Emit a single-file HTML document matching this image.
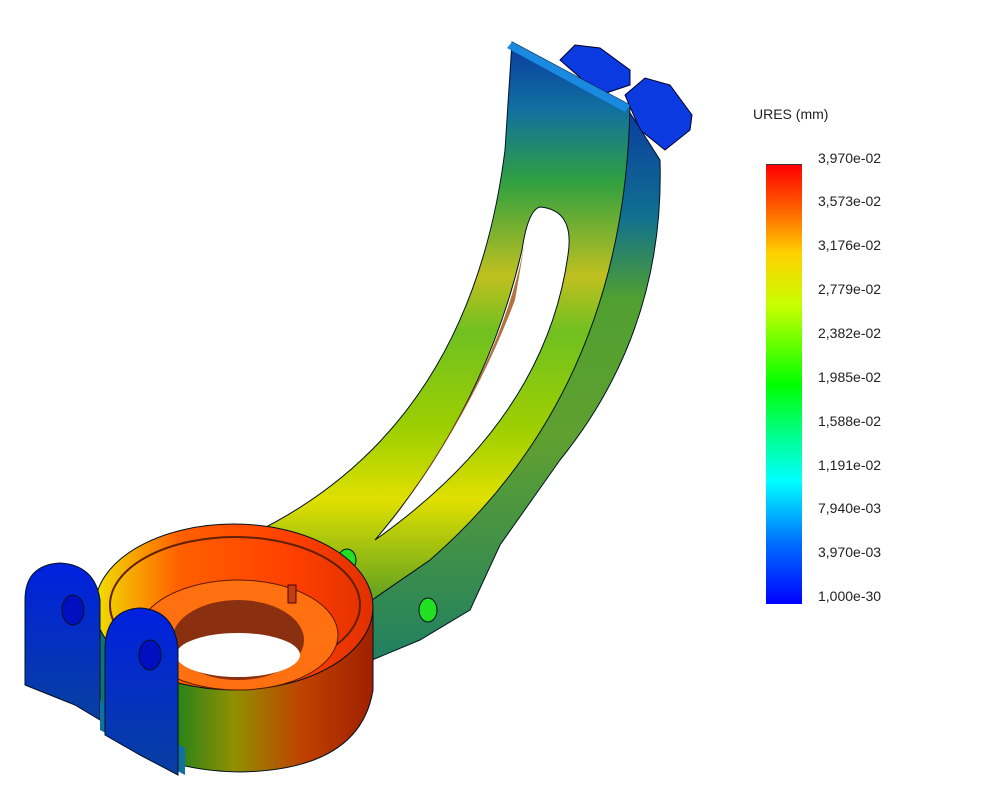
<!DOCTYPE html>
<html><head><meta charset="utf-8"><style>
html,body{margin:0;padding:0;background:#fff;width:990px;height:795px;overflow:hidden}
.t{position:absolute;font-family:"Liberation Sans",sans-serif;font-size:14px;color:#222}
</style></head><body>
<svg width="990" height="795" style="position:absolute;left:0;top:0">
<defs>
<linearGradient id="arm" x1="0" y1="0" x2="0" y2="1">
<stop offset="0" stop-color="#0a3aa0"/><stop offset="0.12" stop-color="#1070a0"/><stop offset="0.25" stop-color="#30a040"/><stop offset="0.42" stop-color="#c0c020"/><stop offset="0.52" stop-color="#70c020"/><stop offset="0.7" stop-color="#a0d000"/><stop offset="0.82" stop-color="#e0e000"/><stop offset="1" stop-color="#60a020"/>
</linearGradient>
<linearGradient id="armr" x1="0" y1="0" x2="0" y2="1">
<stop offset="0" stop-color="#0a3aa0"/><stop offset="0.2" stop-color="#107090"/><stop offset="0.35" stop-color="#50a030"/><stop offset="0.6" stop-color="#60a030"/><stop offset="1" stop-color="#208060"/>
</linearGradient>
<linearGradient id="ring" x1="0" y1="0" x2="1" y2="0">
<stop offset="0" stop-color="#f0e000"/><stop offset="0.3" stop-color="#ff6000"/><stop offset="0.7" stop-color="#ff4000"/><stop offset="1" stop-color="#e03000"/>
</linearGradient>
<linearGradient id="side" x1="0" y1="0" x2="1" y2="0">
<stop offset="0" stop-color="#107080"/><stop offset="0.25" stop-color="#108020"/><stop offset="0.5" stop-color="#909000"/><stop offset="0.75" stop-color="#c04000"/><stop offset="1" stop-color="#a02000"/>
</linearGradient>
<linearGradient id="blue" x1="0" y1="0" x2="0" y2="1">
<stop offset="0" stop-color="#0020e0"/><stop offset="1" stop-color="#0840a0"/>
</linearGradient>
</defs>
<path d="M560,60 L575,45 L600,48 L630,70 L630,85 L600,95 Z" fill="#0a3ae0" stroke="#002" stroke-width="1"/>
<path d="M625,95 L645,78 L670,85 L692,115 L690,130 L665,150 L640,130 Z" fill="#0a3ae0" stroke="#002" stroke-width="1"/>
<path d="M625,105 L660,160 Q665,330 560,460 L500,545 L470,610 L420,640 L372,660 L372,600 L430,560 Q600,380 620,200 Z" fill="url(#armr)" stroke="#012" stroke-width="1"/>
<path d="M512,42 L630,105 Q625,390 430,560 L372,600 L340,590 L300,560 L250,535 Q470,430 505,150 Z" fill="url(#arm)" stroke="#012" stroke-width="1"/>
<path d="M512,42 L630,105 L625,112 L507,48 Z" fill="#1a8ae0"/>
<path d="M540,207 Q575,210 568,255 Q545,420 375,540 Q485,410 522,250 Q528,210 540,207 Z" fill="#fff" stroke="#012"/>
<path d="M527,230 Q505,370 385,530 Q470,420 515,300 Z" fill="#a05010" opacity="0.8"/>
<ellipse cx="347" cy="560" rx="9" ry="11" fill="#20e020" stroke="#012"/>
<ellipse cx="428" cy="610" rx="9" ry="12" fill="#20e020" stroke="#012"/>
<path d="M95,607 L95,690 Q120,770 240,772 Q360,770 373,690 L373,607 Z" fill="url(#side)" stroke="#012"/>
<ellipse cx="234" cy="607" rx="139" ry="83" fill="url(#ring)" stroke="#012"/>
<ellipse cx="235" cy="605" rx="125" ry="68" fill="none" stroke="#602000" stroke-width="2"/>
<ellipse cx="238" cy="635" rx="100" ry="55" fill="#ff7010" stroke="#601800"/>
<ellipse cx="238" cy="640" rx="66" ry="40" fill="#8a3010"/>
<ellipse cx="238" cy="655" rx="62" ry="22" fill="#fff"/>
<rect x="288" y="585" width="8" height="18" fill="#c04010" stroke="#501"/>
<path d="M25,600 Q25,565 60,563 Q95,565 100,600 L100,720 L75,705 L25,685 Z" fill="url(#blue)" stroke="#012"/>
<ellipse cx="73" cy="610" rx="11" ry="15" fill="#0010c0" stroke="#012"/>
<path d="M100,700 L185,748 L185,775 L100,730 Z" fill="#1070a0"/>
<path d="M105,650 Q105,610 140,608 Q175,610 178,650 L178,775 L140,755 L105,735 Z" fill="url(#blue)" stroke="#012"/>
<ellipse cx="150" cy="655" rx="11" ry="15" fill="#0010c0" stroke="#012"/>
</svg>
<div class="t" style="left:753px;top:106px">URES (mm)</div>
<div style="position:absolute;left:766px;top:164px;width:36px;height:439px;background:linear-gradient(#ff0000,#ff6000 10%,#ffd000 20%,#c8ff00 32%,#00ff00 50%,#00ff90 62%,#00ffff 72%,#0070ff 86%,#0000ff);border-top:1px solid #333"></div>
<div class="t" style="left:818px;top:150px">3,970e-02</div>
<div class="t" style="left:818px;top:193px">3,573e-02</div>
<div class="t" style="left:818px;top:237px">3,176e-02</div>
<div class="t" style="left:818px;top:281px">2,779e-02</div>
<div class="t" style="left:818px;top:325px">2,382e-02</div>
<div class="t" style="left:818px;top:369px">1,985e-02</div>
<div class="t" style="left:818px;top:413px">1,588e-02</div>
<div class="t" style="left:818px;top:457px">1,191e-02</div>
<div class="t" style="left:818px;top:500px">7,940e-03</div>
<div class="t" style="left:818px;top:544px">3,970e-03</div>
<div class="t" style="left:818px;top:588px">1,000e-30</div>
</body></html>
